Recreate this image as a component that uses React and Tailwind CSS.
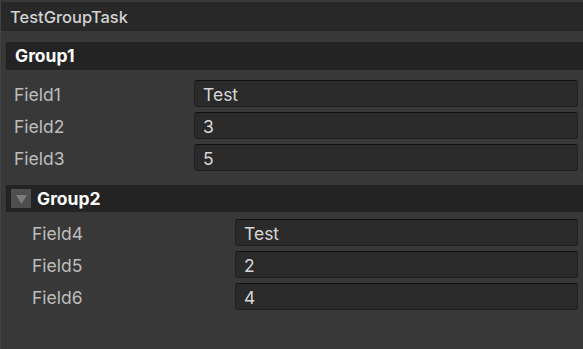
import React from 'react'

const group1 = [
  { label: 'Field1', value: 'Test' },
  { label: 'Field2', value: '3' },
  { label: 'Field3', value: '5' },
]

const group2 = [
  { label: 'Field4', value: 'Test' },
  { label: 'Field5', value: '2' },
  { label: 'Field6', value: '4' },
]

function Row({ label, value, labelW }) {
  return (
    <div className="flex items-center h-[27px]">
      <div className={`${labelW} shrink-0 pt-[3px] text-[17.5px] text-[#bdbdbd]`}>{label}</div>
      <div className="flex-1 h-[27px] flex items-center pl-[8px] pt-[3px] rounded-[3px] bg-[#2a2a2a] border border-[#202020] border-t-[#111111] text-[17.5px] text-[#d6d6d6]">
        {value}
      </div>
    </div>
  )
}

export default function App() {
  return (
    <div
      className="w-[583px] h-[349px] bg-[#383838] pt-[2px] border-l border-[#424242] overflow-hidden"
      style={{ fontFamily: 'Inter, "Noto Sans", sans-serif' }}
    >
      <div className="h-[29px] bg-[#282828] flex items-center pl-[9px] pt-[1px] text-[16.5px] font-medium text-[#d2d2d2]">
        TestGroupTask
      </div>

      <div className="mt-[11px] ml-[5px] h-[28px] bg-[#232323] flex items-center pl-[9px] pt-[1px] text-[17.5px] font-bold text-white">
        Group1
      </div>
      <div className="mt-[10px] pl-[13px] pr-[5px] flex flex-col gap-[5px]">
        {group1.map(r => <Row key={r.label} {...r} labelW="w-[180px]" />)}
      </div>

      <div className="mt-[14px] ml-[5px] h-[27px] bg-[#232323] flex items-center pl-[5px] gap-[6px] text-[17.5px] font-bold text-white">
        <div className="w-[20px] h-[19px] bg-[#4e4e4e] flex items-center justify-center">
          <svg width="11" height="10" viewBox="0 0 11 10">
            <polygon points="0,1 11,1 5.5,10" fill="#7c7c7c" />
          </svg>
        </div>
        <span className="pt-[1px]">Group2</span>
      </div>
      <div className="mt-[7px] pl-[31px] pr-[5px] flex flex-col gap-[5px]">
        {group2.map(r => <Row key={r.label} {...r} labelW="w-[203px]" />)}
      </div>
    </div>
  )
}
